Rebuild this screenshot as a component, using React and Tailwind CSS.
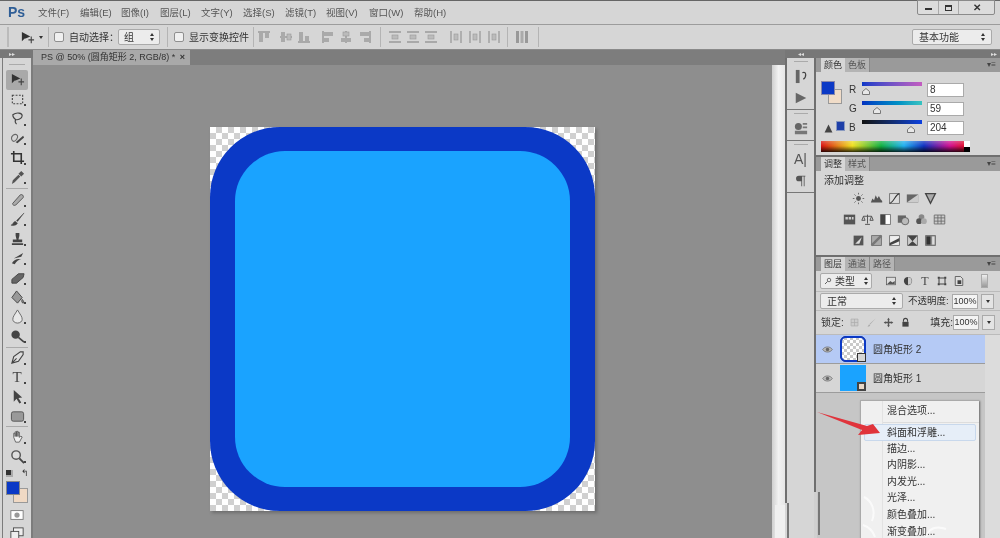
import React from 'react';

const MENUS = [
  ['文件(F)', 38], ['编辑(E)', 80], ['图像(I)', 121], ['图层(L)', 160], ['文字(Y)', 201],
  ['选择(S)', 243], ['滤镜(T)', 285], ['视图(V)', 326], ['窗口(W)', 369], ['帮助(H)', 414],
];

// small glyphs, 16x16 box, shared by the tools column and the panels
const GLYPHS = {
  move: <><path d="M2 2v10l3-3 1 0 5-2z" fill="#333" /><path d="M12 7v7M9 10.500h6" stroke="#444" strokeWidth="1.200" /></>,
  marquee: <rect x="2.500" y="3.500" width="11" height="9" fill="none" stroke="#444" strokeWidth="1.200" strokeDasharray="2 1.500" />,
  lasso: <path d="M3 4c4-3 10-2 10 1s-5 5-7 4-3-3-3-5zM6 9c-1 2 0 4 1 5" fill="none" stroke="#444" strokeWidth="1.200" />,
  magic: <><path d="M2 6c2-3 5-3 6-1s-2 6-4 6-3-3-2-5z" fill="none" stroke="#666" strokeWidth="1.200" /><path d="M6 12l8-7 1 2-7 6z" fill="#444" /></>,
  crop: <path d="M4 1v11h11M1 4h11v11" fill="none" stroke="#333" strokeWidth="1.700" />,
  eyedropper: <path d="M2 15l1-4 6-6 2 2-6 6zM9 4l3-3 3 3-3 3z" fill="#555" />,
  heal: <path d="M3 12L11 3c2-1 4 1 3 3l-8 8c-2 1-4-1-3-2z" fill="#aaa" stroke="#555" />,
  brush: <path d="M15 1L7 9l1 1zM6 10c-3 0-2 3-5 4 3 1 6 0 7-2z" fill="#444" stroke="#444" strokeWidth=".5" />,
  stamp: <path d="M6 2h4v3L9 9h4v3H3V9h4L6 5zM2 13h12v2H2z" fill="#444" />,
  history: <path d="M14 2L4 8l8-2zM2 13c3-5 7-5 10-4-3 0-5 2-7 5z" fill="#444" />,
  eraser: <path d="M2 10l7-6h6l-1 4-7 6H2z" fill="#666" stroke="#444" />,
  bucket: <path d="M7 1l6 7-5 6-6-6zM13 10c2 2 2 4 1 4s-2-2-1-4z" fill="#999" stroke="#444" />,
  drop: <path d="M8 1c3 5 5 7 5 10a5 4 0 0 1-10 0c0-3 2-5 5-10z" fill="#e8e8e8" stroke="#666" />,
  burn: <><circle cx="6" cy="6" r="4.500" fill="#444" /><path d="M9 9l6 5" stroke="#444" strokeWidth="1.800" /></>,
  pen: <path d="M14 2l-3 0-7 5-2 7 7-2 5-7zM2 14l5-5" fill="#ddd" stroke="#444" strokeWidth="1.200" />,
  arrow: <path d="M4 1l9 8-4 .500 3 5-2 1-3-5-3 3z" fill="#444" />,
  shape: <rect x="1.500" y="3" width="13" height="10" rx="2" fill="#999" stroke="#555" />,
  hand: <path d="M4 9V4.500h1.500V8V3h1.500v5V2.500h1.500V8V3.500H10V9l1.500-1.500 1.500 1-3 5.500H6z" fill="#eee" stroke="#555" strokeWidth=".9" />,
  zoom: <><circle cx="6.500" cy="6.500" r="4.500" fill="#ddd" stroke="#555" strokeWidth="1.500" /><path d="M10 10l5 5" stroke="#444" strokeWidth="2" /></>,
  mask: <><rect x="1" y="3" width="14" height="10" fill="#fff" stroke="#777" /><circle cx="8" cy="8" r="3" fill="#999" /></>,
  screen: <><rect x="4" y="1" width="11" height="9" fill="#eee" stroke="#444" /><rect x="1" y="5" width="9" height="9" fill="#eee" stroke="#444" /></>,
  history2: <><path d="M3 1h4v14H3z" fill="#666" /><path d="M10 4c4-2 5 4 1 7" fill="none" stroke="#444" strokeWidth="1.300" /></>,
  play: <path d="M2 2l12 6-12 6z" fill="#666" />,
  cube: <><circle cx="5" cy="5" r="4" fill="#666" /><path d="M10 1h5v2h-5zM10 5h5v2h-5zM1 10h14v4H1z" fill="#777" /></>,
  para: <path d="M6 2h8v1h-1v12h-1V3h-2v12H9V9H6a3.500 3.500 0 0 1 0-7z" fill="#555" />,
  sun: <><circle cx="8" cy="8" r="3" fill="#555" /><path d="M8 1v2M8 13v2M1 8h2M13 8h2M3 3l1.500 1.500M11.500 11.500L13 13M3 13l1.500-1.500M11.500 4.500L13 3" stroke="#555" /></>,
  levels: <path d="M1 13l2-5 2 2 2-6 2 4 2-3 2 4 2 2v2z" fill="#555" />,
  curves: <><rect x="2" y="2" width="12" height="12" fill="#ddd" stroke="#666" /><path d="M2 14C7 13 9 3 14 2" stroke="#333" fill="none" strokeWidth="1.300" /></>,
  expo: <><rect x="1" y="3" width="14" height="10" fill="#666" /><path d="M1 13L15 3v10z" fill="#ccc" /></>,
  vibrance: <path d="M2 2h12L8 14z" fill="#aaa" stroke="#444" strokeWidth="1.600" />,
  hue: <><rect x="1" y="2" width="14" height="12" fill="#555" /><path d="M3 8h3V5H3zM7 8h3V5H7zM11 8h2V5h-2z" fill="#ccc" /></>,
  balance: <path d="M8 2v11M3 4h10M3 4L1 9h4zM13 4l-2 5h4zM5 14h6" fill="none" stroke="#555" strokeWidth="1.200" />,
  bw: <><rect x="2" y="2" width="12" height="12" fill="#fff" stroke="#666" /><rect x="2" y="2" width="6" height="12" fill="#444" /></>,
  photo: <><rect x="1" y="3" width="10" height="9" fill="#666" /><circle cx="10" cy="10" r="4.500" fill="#bbb" stroke="#555" /></>,
  mixer: <><circle cx="8" cy="5" r="3.500" fill="#888" /><circle cx="5" cy="10" r="3.500" fill="#555" /><circle cx="11" cy="10" r="3.500" fill="#aaa" /></>,
  lookup: <path d="M1.500 2.500h13v11h-13zM1.500 6h13M1.500 10h13M6 2.500v11M10 2.500v11" fill="#ccc" stroke="#666" />,
  invert: <><rect x="2" y="2" width="12" height="12" fill="#555" /><path d="M4 12l8-8-3 8z" fill="#ddd" /></>,
  poster: <><rect x="2" y="2" width="12" height="12" fill="#aaa" stroke="#666" /><path d="M2 14L14 2" stroke="#777" strokeWidth="3" /></>,
  thresh: <><rect x="2" y="2" width="12" height="12" fill="#eee" stroke="#666" /><path d="M2 11L14 5v4L2 14z" fill="#444" /></>,
  select: <><rect x="2" y="2" width="12" height="12" fill="#ccc" stroke="#666" /><path d="M2 2h12L8 9zM2 14h12L8 9z" fill="#444" /></>,
  gradmap: <><rect x="2" y="2" width="12" height="12" fill="#888" stroke="#666" /><rect x="3" y="3" width="5" height="10" fill="#333" /><rect x="10" y="3" width="3" height="10" fill="#ddd" /></>,
  image: <><rect x="2" y="3" width="12" height="10" fill="#ddd" stroke="#555" /><path d="M3 12l4-4 3 2 3-2v4z" fill="#555" /></>,
  halfc: <><circle cx="8" cy="8" r="5.500" fill="#444" /><path d="M8 3a5 5 0 0 1 0 10z" fill="#ccc" /></>,
  trans: <path d="M3 5V3h2M11 3h2v2M13 11v2h-2M5 13H3v-2M4 4h8v8H4z" fill="none" stroke="#444" strokeWidth="1.400" />,
  smart: <><path d="M3 2h7l3 3v9H3z" fill="#ddd" stroke="#444" /><rect x="6" y="7" width="5" height="5" fill="#444" /></>,
  search: <><circle cx="10" cy="6" r="3.500" fill="none" stroke="#333" strokeWidth="1.300" /><path d="M7 9l-5 5" stroke="#333" strokeWidth="1.500" /></>,
  lockpix: <path d="M3 3h10v10H3zM3 8h10M8 3v10" fill="#ccc" stroke="#aaa" />,
  lockbrush: <path d="M14 2L5 10l1 1zM5 11c-2 0-1 2-3 3 3 0 4-1 4-2z" fill="#aaa" />,
  lockmove: <path d="M8 1l2 3H9v3h3V6l3 2-3 2V9H9v3h1l-2 3-2-3h1V9H4v1L1 8l3-2v1h3V4H6z" fill="#555" />,
  lock: <><path d="M5 7V5a3 3 0 0 1 6 0v2" fill="none" stroke="#444" strokeWidth="1.500" /><rect x="3.500" y="7" width="9" height="7" fill="#444" /></>,
  eye: <><path d="M1 8c3-5 11-5 14 0-3 5-11 5-14 0z" fill="#bbb" stroke="#666" /><circle cx="8" cy="8" r="2.500" fill="#666" /></>,
  warn: <path d="M8 1l7 14H1z" fill="#444" />,
};

function Glyph({ name, size = 16 }) {
  return (
    <svg width={size} height={size} viewBox="0 0 16 16" className="block shrink-0">
      {GLYPHS[name]}
    </svg>
  );
}

// options bar alignment icons: a thin guide line and two blocks on it
const ALIGN = {
  top: <><path d="M1 2h12" stroke="#9a9a9a" strokeWidth="1.500" /><rect x="2" y="3" width="4" height="9" fill="#aaa" /><rect x="8" y="3" width="4" height="5" fill="#aaa" /></>,
  mid: <><path d="M1 7h12" stroke="#9a9a9a" strokeWidth="1.500" /><rect x="2" y="2" width="4" height="10" fill="#aaa" /><rect x="8" y="4" width="4" height="6" fill="#bbb" stroke="#999" strokeWidth=".6" /></>,
  bottom: <><path d="M1 12h12" stroke="#9a9a9a" strokeWidth="1.500" /><rect x="2" y="2" width="4" height="9" fill="#aaa" /><rect x="8" y="6" width="4" height="5" fill="#aaa" /></>,
  left: <><path d="M2 1v12" stroke="#9a9a9a" strokeWidth="1.500" /><rect x="3" y="2" width="9" height="4" fill="#aaa" /><rect x="3" y="8" width="5" height="4" fill="#aaa" /></>,
  center: <><path d="M7 1v12" stroke="#9a9a9a" strokeWidth="1.500" /><rect x="4" y="2" width="6" height="4" fill="#bbb" stroke="#999" strokeWidth=".6" /><rect x="2" y="8" width="10" height="4" fill="#aaa" /></>,
  right: <><path d="M12 1v12" stroke="#9a9a9a" strokeWidth="1.500" /><rect x="2" y="2" width="9" height="4" fill="#aaa" /><rect x="6" y="8" width="5" height="4" fill="#aaa" /></>,
  rows: <><path d="M1 2h12M1 12h12" stroke="#9a9a9a" strokeWidth="1.300" /><rect x="4" y="5" width="6" height="4" fill="#bbb" stroke="#999" strokeWidth=".6" /></>,
  cols: <><path d="M2 1v12M12 1v12" stroke="#9a9a9a" strokeWidth="1.300" /><rect x="5" y="4" width="4" height="6" fill="#bbb" stroke="#999" strokeWidth=".6" /></>,
  grid: <><rect x="1" y="1" width="3" height="12" fill="#999" /><rect x="5.500" y="1" width="3" height="12" fill="#aaa" /><rect x="10" y="1" width="3" height="12" fill="#999" /></>,
};

function AlignIcon({ kind }) {
  return (
    <svg width="14" height="14" viewBox="0 0 14 14" className="block shrink-0">
      {ALIGN[kind]}
    </svg>
  );
}

function Divider({ className }) {
  return <div className={`w-px h-[20px] bg-[#b4b4b4] shrink-0 ${className}`} />;
}

function UpDown() {
  return <span className="ml-auto flex flex-col gap-[2px] items-center">
    <span className="w-0 h-0 border-x-[2px] border-x-transparent border-b-[3px] border-b-[#333]" />
    <span className="w-0 h-0 border-x-[2px] border-x-transparent border-t-[3px] border-t-[#333]" />
  </span>;
}

function CheckBox({ className }) {
  return <span className={`block w-[10px] h-[10px] rounded-[2px] bg-[#f0f0f0] border border-[#8f8f8f] shrink-0 ${className}`} />;
}

function MenuBar() {
  return (
    <div className="relative h-[24px] shrink-0 border-t border-[#666] bg-[#d6d6d6]">
      <span className="absolute left-[8px] top-[2px] text-[14px] leading-[18px] font-bold text-[#2f5e96]">Ps</span>
      {MENUS.map(([label, x]) => (
        <span key={label} className="absolute top-[5px] text-[9.500px] leading-[14px] text-[#555]" style={{ left: x }}>{label}</span>
      ))}
      <div className="absolute left-[917px] top-[-1px] w-[78px] h-[15px] flex border border-[#8a8a8a] rounded-b-[2px] bg-[#dcdcdc]">
        <div className="w-[21px] flex items-center justify-center border-r border-[#aaa]"><span className="w-[7px] h-[2px] mt-[3px] bg-[#333]" /></div>
        <div className="w-[20px] flex items-center justify-center border-r border-[#aaa]"><span className="w-[7px] h-[6px] border border-t-2 border-[#333]" /></div>
        <div className="flex-1 flex items-center justify-center text-[10px] leading-none font-bold text-[#333]">✕</div>
      </div>
    </div>
  );
}

function OptionsBar() {
  return (
    <div className="h-[25px] shrink-0 flex items-center border-t border-[#9c9c9c] bg-[#d6d6d6] text-[10px] text-[#333]">
      <span className="ml-[7px] w-[2px] h-[20px] bg-[#bbb]" />
      <span className="ml-[11px]"><Glyph name="move" size={15} /></span>
      <span className="ml-[4px] w-0 h-0 border-x-[2px] border-x-transparent border-t-[3px] border-t-[#333]" />
      <Divider className="ml-[5px]" />
      <CheckBox className="ml-[5px]" />
      <span className="ml-[5px] w-[44px] whitespace-nowrap">自动选择：</span>
      <div className="ml-[5px] w-[42px] h-[16px] px-[5px] flex items-center rounded-[2px] bg-[#ececec] border border-[#aaa]">组<UpDown /></div>
      <Divider className="ml-[7px]" />
      <CheckBox className="ml-[6px]" />
      <span className="ml-[5px] w-[60px] whitespace-nowrap">显示变换控件</span>
      <Divider className="ml-[4px]" />
      <div className="ml-[3px] flex gap-[4px]">
        <AlignIcon kind="top" />
        <span className="ml-[4px]"><AlignIcon kind="mid" /></span>
        <AlignIcon kind="bottom" />
      </div>
      <div className="ml-[10px] flex gap-[4px]">
        <AlignIcon kind="left" />
        <AlignIcon kind="center" />
        <span className="ml-[1px]"><AlignIcon kind="right" /></span>
      </div>
      <Divider className="ml-[8px]" />
      <div className="ml-[7px] flex gap-[4px]">
        {[0, 1, 2].map(i => <AlignIcon key={i} kind="rows" />)}
      </div>
      <div className="ml-[11px] flex gap-[5px]">
        {[0, 1, 2].map(i => <AlignIcon key={i} kind="cols" />)}
      </div>
      <Divider className="ml-[6px]" />
      <span className="ml-[7px]"><AlignIcon kind="grid" /></span>
      <Divider className="ml-[9px]" />
      <div className="ml-auto mr-[8px] w-[80px] h-[16px] px-[6px] flex items-center rounded-[2px] bg-[#ececec] border border-[#aaa]">基本功能<UpDown /></div>
    </div>
  );
}

function Tool({ name, active, text }) {
  return (
    <div className={`relative h-[19.500px] mx-[3px] flex items-center justify-center rounded-[2px] ${active ? 'bg-[#a9a9a9]' : ''}`}>
      {text ? <span className="font-['Liberation_Serif',serif] text-[15px] leading-none text-[#444]">{text}</span> : <Glyph name={name} size={15} />}
      {!active && <span className="absolute right-[2px] bottom-[3px] w-[2px] h-[2px] bg-[#444]" />}
    </div>
  );
}

function ToolSep({ className }) {
  return <div className={`mx-[3px] h-px bg-[#aaa] ${className}`} />;
}

function ToolBar() {
  return (
    <div className="w-[33px] shrink-0 flex flex-col pl-[2px]">
      <div className="h-[8px] shrink-0 bg-[#777] -ml-[2px] flex items-center pl-[9px]"><span className="text-[6px] leading-none text-[#ddd]">▸▸</span></div>
      <div className="flex-1 border-l border-r-2 border-[#7c7c7c] bg-[#d6d6d6]">
        <div className="h-[12px] flex items-center justify-center"><span className="w-[16px] h-px bg-[#aaa]" /></div>
        <Tool name="move" active />
        <Tool name="marquee" />
        <Tool name="lasso" />
        <Tool name="magic" />
        <Tool name="crop" />
        <Tool name="eyedropper" />
        <ToolSep className="my-[1px]" />
        <Tool name="heal" />
        <Tool name="brush" />
        <Tool name="stamp" />
        <Tool name="history" />
        <Tool name="eraser" />
        <Tool name="bucket" />
        <Tool name="drop" />
        <Tool name="burn" />
        <ToolSep className="my-[0.500px]" />
        <Tool name="pen" />
        <Tool text="T" />
        <Tool name="arrow" />
        <Tool name="shape" />
        <ToolSep />
        <Tool name="hand" />
        <Tool name="zoom" />
        <div className="relative h-[39px] mx-[2px]">
          <div className="absolute left-[1px] top-[3px] flex gap-[8px] items-center">
            <span className="w-[7px] h-[7px] bg-[#333] border-r-2 border-b-2 border-[#aaa]" />
            <span className="text-[9px] leading-none text-[#333]">↰</span>
          </div>
          <div className="absolute left-[8px] top-[22px] w-[15px] h-[15px] bg-[#f0d9c4] border border-[#999]" />
          <div className="absolute left-[1px] top-[15px] w-[14px] h-[14px] bg-[#0b39c6] border border-[#888]" />
        </div>
        <div className="h-[19px] flex items-center justify-center"><Glyph name="mask" size={14} /></div>
        <div className="h-[19px] flex items-center justify-center"><Glyph name="screen" size={14} /></div>
      </div>
    </div>
  );
}

function Canvas() {
  return (
    <div className="ml-[177px] mt-[62px] w-[385px] h-[384px] shadow-[2px_2px_3px_rgba(60,60,60,0.4)] bg-[conic-gradient(#d0d0d0_25%,#ffffff_0_50%,#d0d0d0_0_75%,#ffffff_0)] bg-[length:12px_12px]">
      <div className="w-full h-full rounded-[70px] bg-[#0b39c6] px-[25px] py-[24px]">
        <div className="w-full h-full rounded-[50px] bg-[#1aa3ff]" />
      </div>
    </div>
  );
}

function DocArea() {
  return (
    <div className="w-[752px] shrink-0 flex flex-col">
      <div className="h-[15px] shrink-0 bg-[#7d7d7d] flex">
        <div className="w-[157px] flex items-center pl-[8px] pr-[5px] bg-[#a9a9a9] text-[9px] text-[#333] whitespace-nowrap">
          PS @ 50% (圆角矩形 2, RGB/8) *
          <span className="ml-auto text-[9px] leading-none font-bold">×</span>
        </div>
      </div>
      <div className="flex-1 flex min-h-0">
        <div className="w-[739px] bg-[#8e8e8e]">
          <Canvas />
        </div>
        <div className="w-[13px] bg-gradient-to-r from-[#cfcfcf] via-[#f2f2f2] to-[#e6e6e6]" />
      </div>
    </div>
  );
}

function DockGroup({ children, className }) {
  return (
    <div className={`flex flex-col items-center border-b border-[#777] ${className}`}>
      <span className="mt-[3px] w-[14px] h-px bg-[#aaa]" />
      {children}
    </div>
  );
}

function Dock() {
  return (
    <div className="w-[31px] shrink-0 flex flex-col border-l-2 border-r-2 border-[#6f6f6f] bg-[#d6d6d6]">
      <div className="h-[8px] -mx-[2px] bg-[#777] flex justify-center items-center"><span className="text-[6px] leading-none text-[#ddd]">◂◂</span></div>
      <DockGroup className="h-[52px]">
        <div className="mt-[7px]"><Glyph name="history2" size={15} /></div>
        <div className="mt-[7px]"><Glyph name="play" size={14} /></div>
      </DockGroup>
      <DockGroup className="h-[31px]">
        <div className="mt-[8px]"><Glyph name="cube" size={14} /></div>
      </DockGroup>
      <DockGroup className="h-[52px]">
        <span className="mt-[5px] text-[14px] leading-[18px] text-[#555]">A|</span>
        <div className="mt-[6px]"><Glyph name="para" size={13} /></div>
      </DockGroup>
    </div>
  );
}

function PanelTabs({ tabs }) {
  return (
    <div className="h-[14px] shrink-0 flex items-end pl-[5px] bg-[#9a9a9a] relative">
      {tabs.map((t, i) => (
        <span key={t} className={`h-[14px] px-[3px] text-[9px] leading-[14px] ${i === 0 ? 'bg-[#d6d6d6] text-[#333]' : 'bg-[#b4b4b4] text-[#555] border-r border-[#888]'}`}>{t}</span>
      ))}
      <span className="absolute right-[4px] top-[2px] text-[8px] leading-[10px] text-[#444]">▾≡</span>
    </div>
  );
}

function ColorRow({ label, value, track, thumb }) {
  return (
    <div className="h-[19px] flex items-center">
      <span className="w-[13px] text-[10px] leading-none text-[#333]">{label}</span>
      <div className="relative w-[60px] h-[13px]">
        <div className={`h-[4px] mt-[-1px] ${track}`} />
        <svg className="absolute top-[5px]" style={{ left: thumb }} width="8" height="7" viewBox="0 0 8 7">
          <path d="M4 .5L7.500 3.500v3h-7v-3z" fill="#e8e8e8" stroke="#777" />
        </svg>
      </div>
      <div className="ml-[5px] w-[37px] h-[14px] pl-[2px] bg-white border border-[#aaa] text-[10px] leading-[12px] text-[#333]">{value}</div>
    </div>
  );
}

function ColorPanel() {
  return (
    <div className="h-[99px] shrink-0 flex flex-col border-b-2 border-[#6f6f6f]">
      <PanelTabs tabs={['颜色', '色板']} />
      <div className="flex-1 relative px-[5px] pt-[9px]">
        <div className="flex">
          <div className="relative w-[28px] h-[57px]">
            <div className="absolute left-[7px] top-[8px] w-[14px] h-[15px] bg-[#f0dcc8] border border-[#999]" />
            <div className="absolute left-0 top-0 w-[14px] h-[14px] bg-[#0b39c6] border border-[#88a]" />
            <div className="absolute left-[3px] top-[43px]"><Glyph name="warn" size={9} /></div>
            <div className="absolute left-[15px] top-[40px] w-[9px] h-[10px] bg-[#1e3fa8] border border-[#8a9ac0]" />
          </div>
          <div className="-mt-[1px]">
            <ColorRow label="R" value="8" track="bg-gradient-to-r from-[#0838c8] to-[#c45cc0]" thumb={0} />
            <ColorRow label="G" value="59" track="bg-gradient-to-r from-[#0a30c0] to-[#38c4c0]" thumb={11} />
            <ColorRow label="B" value="204" track="bg-gradient-to-r from-[#111111] to-[#0c40e0]" thumb={45} />
          </div>
        </div>
        <div className="absolute left-[5px] top-[69px] w-[149px] h-[11px] flex">
          <div className="flex-1 bg-[linear-gradient(to_bottom,rgba(255,255,255,0.25),rgba(0,0,0,0)_45%,rgba(0,0,0,0.8)),linear-gradient(to_right,#d81010,#f0e020_22%,#10b040_42%,#20b0f0_58%,#1030c0_72%,#d01090_90%,#e01030)]" />
          <div className="w-[6px] flex flex-col"><span className="flex-1 bg-white" /><span className="flex-1 bg-black" /></div>
        </div>
      </div>
    </div>
  );
}

function AdjustPanel() {
  const rows = [
    ['sun', 'levels', 'curves', 'expo', 'vibrance'],
    ['hue', 'balance', 'bw', 'photo', 'mixer', 'lookup'],
    ['invert', 'poster', 'thresh', 'select', 'gradmap'],
  ];
  return (
    <div className="h-[100px] shrink-0 flex flex-col border-b-2 border-[#6f6f6f]">
      <PanelTabs tabs={['调整', '样式']} />
      <div className="pl-[8px] pt-[3px] text-[10px] leading-[14px] text-[#333]">添加调整</div>
      <div className="w-[157px] mt-[4px] flex flex-col gap-[8px]">
        {rows.map((r, i) => (
          <div key={i} className="flex justify-center gap-[5px]">
            {r.map(n => <Glyph key={n} name={n} size={13} />)}
          </div>
        ))}
      </div>
    </div>
  );
}

function SmallSelect({ children, className }) {
  return <div className={`h-[16px] px-[6px] flex items-center rounded-[2px] bg-[#ececec] border border-[#aaa] text-[10px] text-[#333] ${className}`}>{children}<UpDown /></div>;
}

function PercentField() {
  return (
    <div className="flex items-center gap-[3px]">
      <div className="w-[26px] h-[15px] bg-[#f4f4f4] border border-[#aaa] text-[9px] leading-[13px] text-center text-[#333]">100%</div>
      <div className="w-[13px] h-[15px] bg-[#e4e4e4] border border-[#aaa] flex items-center justify-center">
        <span className="w-0 h-0 border-x-[2px] border-x-transparent border-t-[3px] border-t-[#333]" />
      </div>
    </div>
  );
}

function LayerRow({ name, selected, thumb }) {
  return (
    <div className={`h-[29px] shrink-0 flex items-center border-b border-[#9c9c9c] ${selected ? 'bg-[#b5caf5]' : 'bg-[#d6d6d6]'}`}>
      <span className="ml-[6px]"><Glyph name="eye" size={11} /></span>
      <div className="ml-[7px]">{thumb}</div>
      <span className="ml-[7px] text-[10px] text-[#333]">{name}</span>
    </div>
  );
}

function LayersPanel() {
  return (
    <div className="flex-1 min-h-0 flex flex-col">
      <PanelTabs tabs={['图层', '通道', '路径']} />
      <div className="h-[20px] shrink-0 flex items-center px-[4px]">
        <SmallSelect className="w-[52px] !px-[3px]"><Glyph name="search" size={8} /><span className="ml-[3px]">类型</span></SmallSelect>
        <div className="ml-[13px] flex gap-[5px]">
          {['image', 'halfc'].map(n => <Glyph key={n} name={n} size={12} />)}
          <span className="w-[12px] text-center font-['Liberation_Serif',serif] text-[12px] leading-[12px] text-[#444]">T</span>
          {['trans', 'smart'].map(n => <Glyph key={n} name={n} size={12} />)}
        </div>
        <div className="ml-[16px] w-[7px] h-[14px] bg-gradient-to-b from-[#eee] to-[#999] border border-[#aaa]" />
      </div>
      <div className="h-[19px] shrink-0 flex items-center px-[4px] border-t border-[#bbb] text-[10px] text-[#333]">
        <SmallSelect className="w-[83px]">正常</SmallSelect>
        <span className="ml-[5px] w-[44px] whitespace-nowrap text-[9.500px]">不透明度:</span>
        <PercentField />
      </div>
      <div className="h-[25px] shrink-0 flex items-center px-[5px] border-t border-b border-[#bbb] text-[10px] text-[#333]">
        <span className="w-[27px]">锁定:</span>
        <div className="ml-[5px] flex gap-[6px]">
          {['lockpix', 'lockbrush', 'lockmove', 'lock'].map(n => <Glyph key={n} name={n} size={11} />)}
        </div>
        <span className="ml-[19px] w-[25px] whitespace-nowrap">填充:</span>
        <PercentField />
      </div>
      <div className="flex-1 flex min-h-0">
        <div className="w-[169px] flex flex-col bg-[#c6c6c6]">
          <LayerRow selected name="圆角矩形 2" thumb={
            <div className="relative w-[26px] h-[26px] border border-[#335] rounded-[6px] bg-[conic-gradient(#c9c9c9_25%,#ffffff_0_50%,#c9c9c9_0_75%,#ffffff_0)] bg-[length:6px_6px] outline-2 -outline-offset-2 outline-[#0b39c6]">
              <span className="absolute right-[-1px] bottom-[-1px] w-[9px] h-[9px] bg-[#d6d6d6] border border-[#333]" />
            </div>
          } />
          <LayerRow name="圆角矩形 1" thumb={
            <div className="relative w-[26px] h-[26px] bg-[#1aa3ff]">
              <span className="absolute right-0 bottom-0 w-[9px] h-[9px] bg-[#e8d8c8] border-2 border-[#444]" />
            </div>
          } />
        </div>
        <div className="flex-1 bg-[#dcdcdc]" />
      </div>
    </div>
  );
}

function ContextMenu() {
  const items = ['斜面和浮雕...', '描边...', '内阴影...', '内发光...', '光泽...', '颜色叠加...', '渐变叠加...'];
  return (
    <div className="absolute left-[860px] top-[400px] w-[119px] h-[140px] bg-[#f0f0f0] border-l border-t border-[#aaa] shadow-[1px_1px_2px_#666] text-[10px] text-[#333]">
      <div className="absolute left-[21px] top-0 bottom-0 w-px bg-[#e2e2e2]" />
      <div className="h-[21px] pl-[26px] leading-[20px]">混合选项...</div>
      <div className="ml-[22px] mb-[1px] h-px bg-[#ddd]" />
      {items.map((t, i) => (
        <div key={t} className={`relative h-[16.600px] leading-[16px] ${i === 0 ? 'mx-[3px] pl-[22px] bg-[#e6eef8] border border-[#c8d8ec] rounded-[2px]' : 'pl-[26px]'}`}>{t}</div>
      ))}
    </div>
  );
}

// the screenshot's lower edge is torn: panel lines jump a few pixels to the right
function TornEdges() {
  return (
    <>
      <div className="absolute left-[775px] top-[505px] w-[12px] h-[33px] bg-[#f0f0f0]" />
      <div className="absolute left-[785px] top-[503px] w-[2px] h-[35px] bg-[#d6d6d6]" />
      <div className="absolute left-[787px] top-[503px] w-[2px] h-[35px] bg-[#777]" />
      <div className="absolute left-[814px] top-[492px] w-[3px] h-[46px] bg-[#d0d0d0]" />
      <div className="absolute left-[818px] top-[492px] w-[2px] h-[43px] bg-[#777]" />
      <svg className="absolute left-[860px] top-[495px] opacity-70" width="90" height="43" viewBox="0 0 90 43">
        <path d="M4 2c8 4 12 14 8 24M3 30c6 2 10 6 12 12M66 42c2-8 10-12 20-8" fill="none" stroke="#ffffff" strokeWidth="2" />
      </svg>
    </>
  );
}

export default function App() {
  return (
    <div className="relative w-[1000px] h-[538px] overflow-hidden flex flex-col bg-[#d6d6d6] font-['Liberation_Sans','Noto_Sans_CJK_SC',sans-serif] blur-[0.4px]">
      <MenuBar />
      <OptionsBar />
      <div className="flex-1 flex min-h-0 border-t border-[#8a8a8a]">
        <ToolBar />
        <DocArea />
        <Dock />
        <div className="flex-1 flex flex-col min-w-0">
          <div className="h-[8px] shrink-0 bg-[#777] flex justify-end items-center pr-[3px]"><span className="text-[6px] leading-none text-[#ddd]">▸▸</span></div>
          <ColorPanel />
          <AdjustPanel />
          <LayersPanel />
        </div>
      </div>
      <ContextMenu />
      <TornEdges />
      {/* red arrow pointing at the menu item */}
      <svg className="absolute left-[815px] top-[408px]" width="70" height="30" viewBox="0 0 70 30">
        <path d="M2 4L52 18l6-2 7 9-22 2 4-5z" fill="#e0343c" />
      </svg>
    </div>
  );
}
